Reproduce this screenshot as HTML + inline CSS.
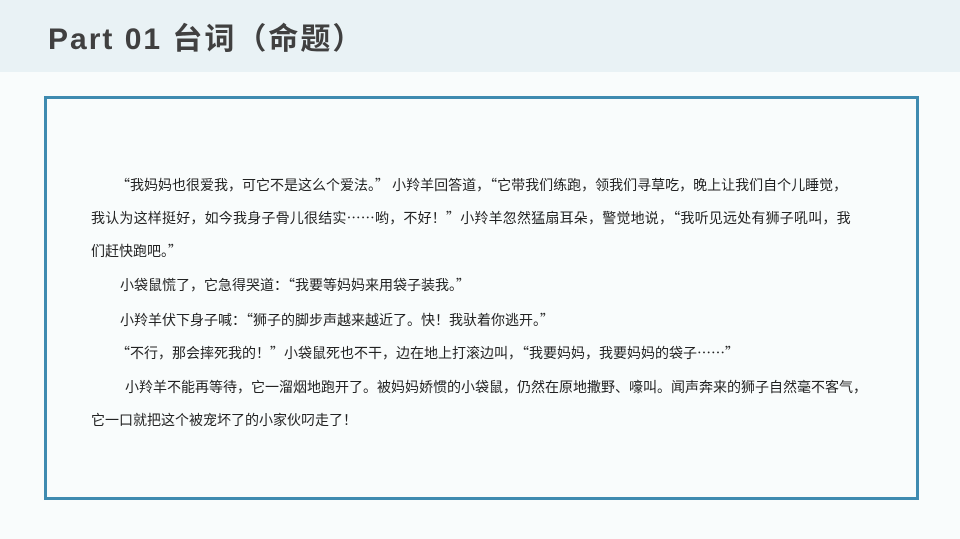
<!DOCTYPE html>
<html><head><meta charset="utf-8"><style>
html,body{margin:0;padding:0}
body{width:960px;height:539px;position:relative;background:#f9fcfc;overflow:hidden;font-family:"Liberation Sans","Noto Sans CJK SC",sans-serif}
.hd{position:absolute;left:0;top:0;width:960px;height:72px;background:#e9f2f5}
.ti{position:absolute;left:48px;top:14px;font-size:30px;font-weight:bold;color:#404040;letter-spacing:2px;white-space:nowrap}
.box{position:absolute;left:44px;top:96px;width:869px;height:398px;border:3px solid #3f8bb0}
.l{position:absolute;font-size:14px;color:#222;white-space:nowrap;line-height:20px;font-family:"Noto Sans CJK SC","WenQuanYi Zen Hei",sans-serif}
</style></head><body>
<div class="hd"></div>
<div class="ti">Part 01 台词（命题）</div>
<div class="box"></div>
<div class="l" style="left:116px;top:175px">“我妈妈也很爱我，可它不是这么个爱法。” 小羚羊回答道，“它带我们练跑，领我们寻草吃，晚上让我们自个儿睡觉，</div>
<div class="l" style="left:91px;top:208px;letter-spacing:0.2px">我认为这样挺好，如今我身子骨儿很结实……哟，不好！”小羚羊忽然猛扇耳朵，警觉地说，“我听见远处有狮子吼叫，我</div>
<div class="l" style="left:91px;top:241px">们赶快跑吧。”</div>
<div class="l" style="left:120px;top:275px">小袋鼠慌了，它急得哭道：“我要等妈妈来用袋子装我。”</div>
<div class="l" style="left:120px;top:310px">小羚羊伏下身子喊：“狮子的脚步声越来越近了。快！我驮着你逃开。”</div>
<div class="l" style="left:116px;top:343px">“不行，那会摔死我的！”小袋鼠死也不干，边在地上打滚边叫，“我要妈妈，我要妈妈的袋子……”</div>
<div class="l" style="left:125px;top:377px">小羚羊不能再等待，它一溜烟地跑开了。被妈妈娇惯的小袋鼠，仍然在原地撒野、嚎叫。闻声奔来的狮子自然毫不客气，</div>
<div class="l" style="left:91px;top:410px">它一口就把这个被宠坏了的小家伙叼走了！</div>
</body></html>
